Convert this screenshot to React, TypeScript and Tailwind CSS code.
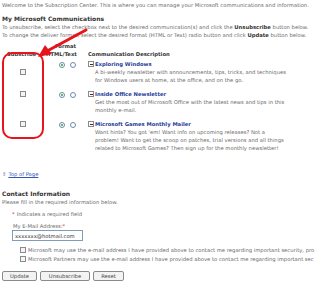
import React from "react";

const Check = ({ cls = "" }: { cls?: string }) => (
  <span className={"block w-[6px] h-[6px] border border-[#8a8a8a] bg-[#f4f4f4] " + cls} />
);

const Radio = ({ on }: { on?: boolean }) => (
  <span className="flex items-center justify-center w-[6px] h-[6px] rounded-full border border-[#6b8bb0] bg-white">
    {on && <span className="block w-[2px] h-[2px] rounded-full bg-[#2fa82f]" />}
  </span>
);

const Expand = () => (
  <span className="flex items-center justify-center w-[6px] h-[6px] border border-[#8a8a8a] bg-white shrink-0">
    <span className="block w-[3px] h-px bg-[#333]" />
  </span>
);

const rows = [
  {
    title: "Exploring Windows",
    desc: [
      "A bi-weekly newsletter with announcements, tips, tricks, and techniques",
      "for Windows users at home, at the office, and on the go.",
    ],
    cb: "mt-[9px]",
  },
  {
    title: "Inside Office Newsletter",
    desc: [
      "Get the most out of Microsoft Office with the latest news and tips in this",
      "monthly e-mail.",
    ],
    cb: "mt-[1px]",
  },
  {
    title: "Microsoft Games Monthly Mailer",
    desc: [
      "Want hints? You got 'em! Want info on upcoming releases? Not a",
      "problem! Want to get the scoop on patches, trial versions and all things",
      "related to Microsoft Games? Then sign up for the monthly newsletter!",
    ],
    cb: "mt-[1px]",
  },
];

export default function App() {
  return (
    <div className="relative w-[320px] h-[283px] overflow-hidden bg-white text-[#6a6a6a] font-['DejaVu_Sans',sans-serif] text-[5.25px] leading-[8px]">
      <div className="pl-[2px] pt-[1px]">
        <p className="whitespace-nowrap">
          Welcome to the Subscription Center. This is where you can manage your Microsoft communications and information.
        </p>
        <h2 className="mt-[6px] font-bold text-[6px] leading-[8px] text-[#333]">My Microsoft Communications</h2>
        <p className="whitespace-nowrap">
          To unsubscribe, select the checkbox next to the desired communication(s) and click the{" "}
          <b className="text-[#333]">Unsubscribe</b> button below.
        </p>
        <p className="whitespace-nowrap">
          To change the deliver format, select the desired format (HTML or Text) radio button and click{" "}
          <b className="text-[#333]">Update</b> button below.
        </p>

        {/* header */}
        <div className="mt-[3px] flex font-bold text-[#333]">
          <div className="w-[42px]" />
          <div className="w-[44px] pl-[11px] leading-[8px]">Format</div>
        </div>
        <div className="flex font-bold text-[#333] leading-[8px]">
          <div className="w-[42px] pl-[5px]">Subscribe</div>
          <div className="w-[44px] pl-[2px]">HTML/Text</div>
          <div>Communication Description</div>
        </div>

        <div className="mt-[2px] flex flex-col gap-[6px]">
          {rows.map((r) => (
            <div key={r.title} className="flex">
              <div className="w-[42px] flex justify-center">
                <Check cls={r.cb} />
              </div>
              <div className="w-[44px] flex gap-[5px] pl-[15px] pt-[2px]">
                <Radio on />
                <Radio />
              </div>
              <div className="flex flex-col">
                <div className="flex items-center gap-[1px]">
                  <Expand />
                  <span className="font-bold text-[#1f3c99] leading-[8px]">{r.title}</span>
                </div>
                <div className="pl-[7px]">
                  {r.desc.map((d) => (
                    <p key={d} className="whitespace-nowrap">{d}</p>
                  ))}
                </div>
              </div>
            </div>
          ))}
        </div>

        <p className="mt-[18px] text-[#3355bb]">
          <span className="mr-[2px]">⇧</span>
          <span className="underline">Top of Page</span>
        </p>

        <h2 className="mt-[12px] font-bold text-[6px] leading-[8px] text-[#333]">Contact Information</h2>
        <p>Please fill in the required information below.</p>

        <p className="mt-[4px] pl-[10px]">
          <span className="text-[#e03030] mr-[2px]">*</span>Indicates a required field
        </p>
        <p className="mt-[4px] pl-[11px]">
          My E-Mail Address:<span className="text-[#e03030]">*</span>
        </p>
        <div className="ml-[10px] w-[71px] h-[11px] border border-[#7f9db9] bg-white flex items-center pl-[2px] text-[#333]">
          xxxxxxx@hotmail.com
        </div>

        <div className="mt-[5px] pl-[18px] flex flex-col gap-[1px]">
          <div className="flex items-center gap-[2px]">
            <Check />
            <span className="whitespace-nowrap">
              Microsoft may use the e-mail address I have provided above to contact me regarding important security, pro
            </span>
          </div>
          <div className="flex items-center gap-[2px]">
            <Check />
            <span className="whitespace-nowrap">
              Microsoft Partners may use the e-mail address I have provided above to contact me regarding important sec
            </span>
          </div>
        </div>

        <div className="mt-[8px] flex gap-[3px] text-[#444]">
          <button className="w-[35px] h-[10px] border border-[#8a8a8a] rounded-[2px] bg-[#f3f3f3] leading-[8px]">Update</button>
          <button className="w-[50px] h-[10px] border border-[#8a8a8a] rounded-[2px] bg-[#f3f3f3] leading-[8px]">Unsubscribe</button>
          <button className="w-[31px] h-[10px] border border-[#8a8a8a] rounded-[2px] bg-[#f3f3f3] leading-[8px]">Reset</button>
        </div>
      </div>

      {/* annotation */}
      <div className="absolute left-[2px] top-[52px] w-[42px] h-[87px] border-2 border-[#e8141b] rounded-[10px]" />
      <svg className="absolute left-0 top-0" width="320" height="283" viewBox="0 0 320 283">
        <line x1="86" y1="30" x2="49" y2="50" stroke="#e8141b" strokeWidth="3" strokeLinecap="round" />
        <polygon points="38,57 45,45 52,54" fill="#e8141b" />
      </svg>
    </div>
  );
}
